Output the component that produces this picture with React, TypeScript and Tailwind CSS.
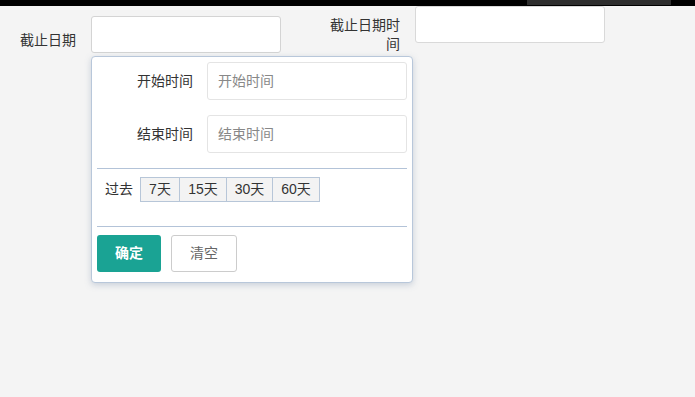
export default function App() {
  return (
    <div
      className="w-[695px] h-[397px] bg-[#f4f4f4] text-[14px] text-[#333] overflow-hidden"
      style={{ fontFamily: '"Liberation Sans", "Noto Sans CJK SC", sans-serif' }}
    >
      <div className="h-[6px] bg-black flex">
        <div className="ml-[527px] w-[144px] h-[5px] bg-[#2e2e2e]" />
      </div>

      <div className="flex items-start">
        <div className="w-[91px] pl-[20px] pt-[25px] leading-[19px]">截止日期</div>

        <div className="relative mt-[10px]">
          <div className="w-[190px] h-[37px] bg-white border border-[#d4d4d4] rounded-[3px]" />

          <div className="absolute left-0 top-[40px] w-[322px] bg-white border border-[#b8c7da] rounded-[4px] shadow-[0_2px_6px_rgba(120,140,170,0.35)] px-[5px] pt-[5px] pb-[10px] z-10">
            <div className="flex items-center h-[38px]">
              <div className="w-[110px] pr-[14px] text-right">开始时间</div>
              <div className="w-[200px] h-[38px] border border-[#e4e4e4] rounded-[3px] flex items-center px-[10px] text-[#888]">
                开始时间
              </div>
            </div>
            <div className="flex items-center h-[38px] mt-[15px]">
              <div className="w-[110px] pr-[14px] text-right">结束时间</div>
              <div className="w-[200px] h-[38px] border border-[#e4e4e4] rounded-[3px] flex items-center px-[10px] text-[#888]">
                结束时间
              </div>
            </div>

            <div className="mt-[15px] border-t border-[#b3c3d8]" />

            <div className="flex items-center mt-[8px] h-[25px]">
              <span className="pl-[8px] pr-[7px]">过去</span>
              <div className="flex h-[25px] border border-[#b7c6d8] bg-[#f3f3f3]">
                <div className="w-[39px] flex items-center justify-center border-r border-[#b7c6d8]">7天</div>
                <div className="w-[47px] flex items-center justify-center border-r border-[#b7c6d8]">15天</div>
                <div className="w-[46px] flex items-center justify-center border-r border-[#b7c6d8]">30天</div>
                <div className="w-[46px] flex items-center justify-center">60天</div>
              </div>
            </div>

            <div className="mt-[24px] border-t border-[#b3c3d8]" />

            <div className="flex mt-[8px] gap-[10px]">
              <div className="w-[64px] h-[37px] bg-[#1aa394] rounded-[3px] text-white font-semibold flex items-center justify-center">
                确定
              </div>
              <div className="w-[66px] h-[37px] bg-white border border-[#cccccc] rounded-[3px] text-[#666] flex items-center justify-center">
                清空
              </div>
            </div>
          </div>
        </div>

        <div className="w-[72px] ml-[47px] pt-[10px] text-right leading-[19px]">截止日期时间</div>

        <div className="ml-[15px] w-[190px] h-[37px] bg-white border border-[#d9d9d9] rounded-[3px]" />
      </div>
    </div>
  );
}
